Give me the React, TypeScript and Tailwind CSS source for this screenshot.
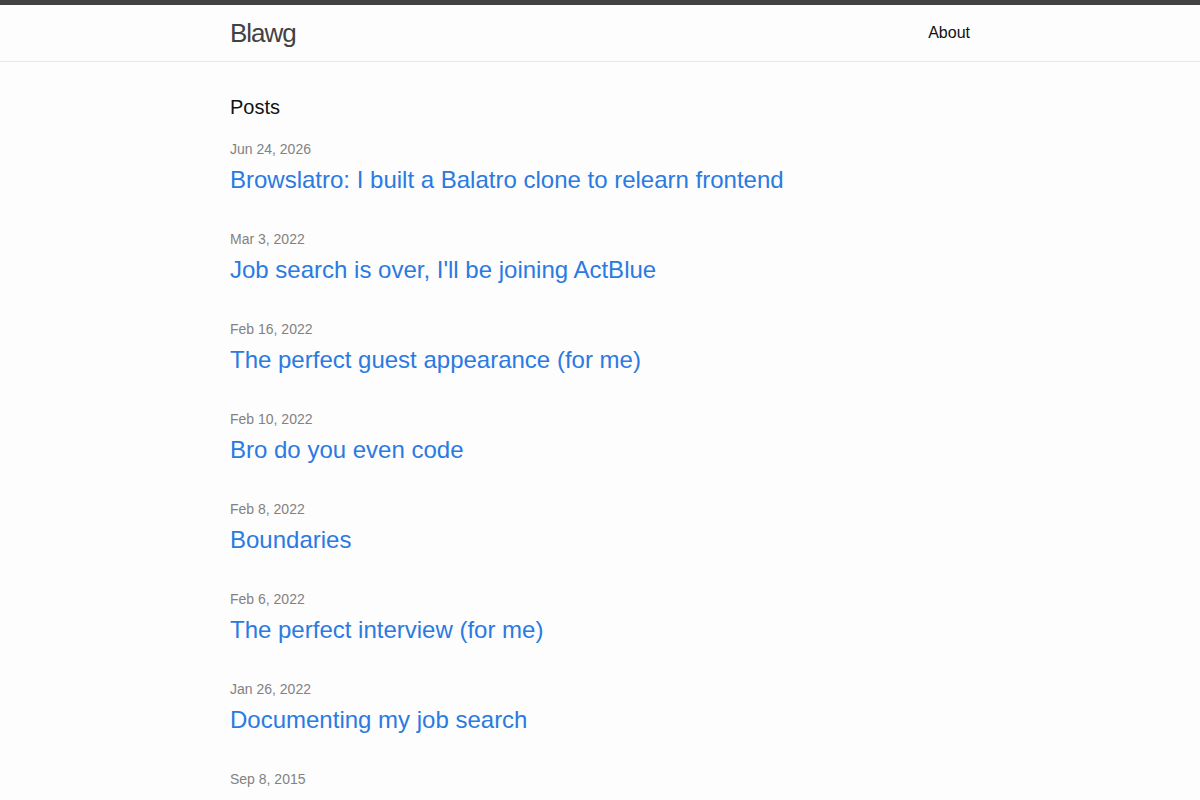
const posts = [
  { date: "Jun 24, 2026", title: "Browslatro: I built a Balatro clone to relearn frontend" },
  { date: "Mar 3, 2022", title: "Job search is over, I'll be joining ActBlue" },
  { date: "Feb 16, 2022", title: "The perfect guest appearance (for me)" },
  { date: "Feb 10, 2022", title: "Bro do you even code" },
  { date: "Feb 8, 2022", title: "Boundaries" },
  { date: "Feb 6, 2022", title: "The perfect interview (for me)" },
  { date: "Jan 26, 2022", title: "Documenting my job search" },
  { date: "Sep 8, 2015", title: "" },
];

export default function App() {
  return (
    <div
      className="min-h-screen bg-[#fdfdfd] text-[#111] text-base leading-6"
      style={{ fontFamily: '"Liberation Sans", Arial, sans-serif' }}
    >
      <header className="border-t-[5px] border-t-[#424242] border-b border-b-[#e8e8e8]">
        <div className="max-w-[740px] h-[56px] mx-auto flex justify-between items-center">
          <a href="#" className="text-[26px] leading-[54px] font-light tracking-[-1px] text-[#424242]">
            Blawg
          </a>
          <nav>
            <a href="#" className="text-[#111] text-base leading-[54px]">
              About
            </a>
          </nav>
        </div>
      </header>
      <main className="pt-[30px] pb-[30px]">
        <div className="max-w-[740px] mx-auto">
          <h2 className="text-[20px] leading-[30px] mb-[15px]">Posts</h2>
          <ul>
            {posts.map((p) => (
              <li key={p.date} className="mb-[29px]">
                <span className="text-sm text-[#828282]">{p.date}</span>
                {p.title && (
                  <h3 className="text-2xl leading-9 pt-px">
                    <a href="#" className="text-[#2a7ae2]">
                      {p.title}
                    </a>
                  </h3>
                )}
              </li>
            ))}
          </ul>
        </div>
      </main>
    </div>
  );
}
